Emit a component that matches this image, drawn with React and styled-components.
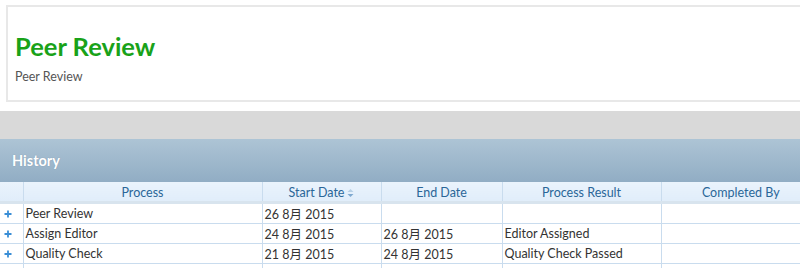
import React from "react";
import styled, { createGlobalStyle } from "styled-components";

const Global = createGlobalStyle`
  html, body { margin: 0; padding: 0; background: #fff; overflow: hidden; }
  body { font-family: Lato, "Noto Sans CJK SC", sans-serif; }
`;

const Page = styled.div`
  width: 800px;
  height: 268px;
  overflow: hidden;
`;

const TopArea = styled.div`
  padding: 5px 0 9px 6px;
`;

const Card = styled.div`
  width: 820px;
  height: 93px;
  border: 2px solid #e8e8e8;
  padding: 0 0 0 7px;
  box-sizing: content-box;
  display: flex;
  flex-direction: column;
`;

const Title = styled.h1`
  margin: 24px 0 0 0;
  font-size: 25.5px;
  line-height: 30px;
  font-weight: 700;
  color: #19a219;
  font-family: Lato, sans-serif;
`;

const Subtitle = styled.div`
  margin-top: 8px;
  font-size: 12.5px;
  color: #555;
  font-family: Lato, sans-serif;
`;

const GrayBand = styled.div`
  height: 28px;
  background: #d9d9d9;
`;

const PanelHeader = styled.div`
  height: 43px;
  background: linear-gradient(#adc4d5, #91adc4);
  display: flex;
  align-items: center;
  padding-left: 12px;
  color: #fff;
  font-weight: 700;
  font-size: 14.5px;
  text-shadow: 0 0 1px rgba(60, 90, 120, 0.4);
`;

const Table = styled.table`
  width: 820px;
  border-collapse: collapse;
  table-layout: fixed;
  font-family: Lato, "Noto Sans CJK SC", sans-serif;
  font-size: 12.5px;
`;

const Th = styled.th`
  height: 18px;
  padding: 1px 0 0 0;
  background: linear-gradient(#eaf3fc, #e0edfa);
  color: #2a6698;
  font-weight: 400;
  text-align: center;
  border-left: 1px solid #c9dcee;
  border-bottom: 3px solid #d8e4ee;
  &:first-child { border-left: none; }
`;

const Td = styled.td`
  height: 18px;
  padding: 0 0 0 2px;
  color: #333;
  border-left: 1px solid #c9dcee;
  border-bottom: 1px solid #c9dcee;
  white-space: nowrap;
  overflow: hidden;
  &:first-child { border-left: none; }
`;

const PlusIcon = styled.svg`
  display: block;
  margin-left: 2px;
`;

const SortIcon = styled.svg`
  margin-left: 3px;
  vertical-align: middle;
`;

const rows = [
  ["Peer Review", "26 8月 2015", "", ""],
  ["Assign Editor", "24 8月 2015", "26 8月 2015", "Editor Assigned"],
  ["Quality Check", "21 8月 2015", "24 8月 2015", "Quality Check Passed"],
  ["", "", "", ""],
];

export default function App() {
  return (
    <Page>
      <Global />
      <TopArea>
        <Card>
          <Title>Peer Review</Title>
          <Subtitle>Peer Review</Subtitle>
        </Card>
      </TopArea>
      <GrayBand />
      <PanelHeader>History</PanelHeader>
      <Table>
        <colgroup>
          <col style={{ width: 23 }} />
          <col style={{ width: 239 }} />
          <col style={{ width: 119 }} />
          <col style={{ width: 121 }} />
          <col style={{ width: 159 }} />
          <col style={{ width: 159 }} />
        </colgroup>
        <thead>
          <tr>
            <Th />
            <Th>Process</Th>
            <Th>
              Start Date
              <SortIcon width="7" height="10" viewBox="0 0 7 10">
                <path d="M0.5 4 L3.5 1 L6.5 4 Z" fill="#b7d0e6" />
                <path d="M0.5 6 L3.5 9 L6.5 6 Z" fill="#7fa9d0" />
              </SortIcon>
            </Th>
            <Th>End Date</Th>
            <Th>Process Result</Th>
            <Th>Completed By</Th>
          </tr>
        </thead>
        <tbody>
          {rows.map((r, i) => (
            <tr key={i}>
              <Td>
                {i < 3 ? (
                  <PlusIcon width="8" height="8" viewBox="0 0 8 8">
                    <path d="M4 0.5 V7.5 M0.5 4 H7.5" stroke="#3a8ed6" strokeWidth="1.8" />
                  </PlusIcon>
                ) : null}
              </Td>
              <Td>{r[0]}</Td>
              <Td>{r[1]}</Td>
              <Td>{r[2]}</Td>
              <Td>{r[3]}</Td>
              <Td />
            </tr>
          ))}
        </tbody>
      </Table>
    </Page>
  );
}
